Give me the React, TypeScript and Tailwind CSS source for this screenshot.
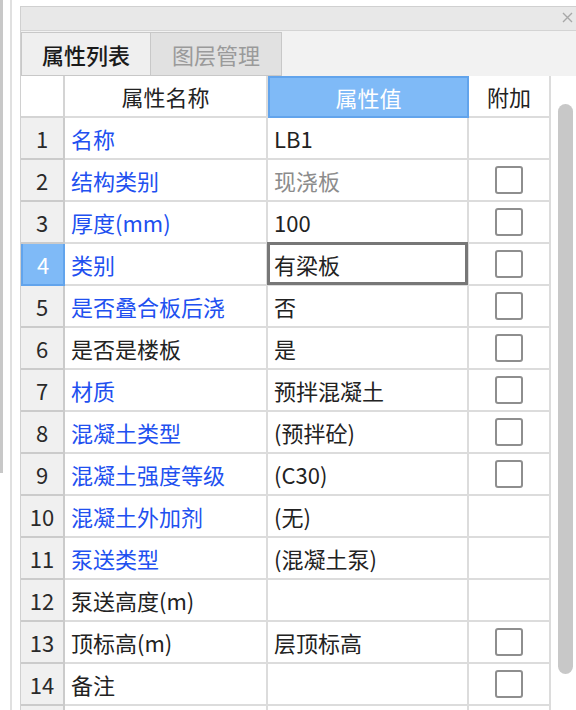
import React from 'react';

type Row = {
  no: number;
  name: string;
  value: string;
  blue: boolean;
  check: boolean;
  muted?: boolean;
};

const rows: Row[] = [
  { no: 1, name: '名称', value: 'LB1', blue: true, check: false },
  { no: 2, name: '结构类别', value: '现浇板', blue: true, check: true, muted: true },
  { no: 3, name: '厚度(mm)', value: '100', blue: true, check: true },
  { no: 4, name: '类别', value: '有梁板', blue: true, check: true },
  { no: 5, name: '是否叠合板后浇', value: '否', blue: true, check: true },
  { no: 6, name: '是否是楼板', value: '是', blue: false, check: true },
  { no: 7, name: '材质', value: '预拌混凝土', blue: true, check: true },
  { no: 8, name: '混凝土类型', value: '(预拌砼)', blue: true, check: true },
  { no: 9, name: '混凝土强度等级', value: '(C30)', blue: true, check: true },
  { no: 10, name: '混凝土外加剂', value: '(无)', blue: true, check: false },
  { no: 11, name: '泵送类型', value: '(混凝土泵)', blue: true, check: false },
  { no: 12, name: '泵送高度(m)', value: '', blue: false, check: false },
  { no: 13, name: '顶标高(m)', value: '层顶标高', blue: false, check: true },
  { no: 14, name: '备注', value: '', blue: false, check: true },
];

const SELECTED = 4;

const font = { fontFamily: '"Noto Sans CJK SC", "Noto Sans", sans-serif' };

const Checkbox = () => (
  <div className="w-[28px] h-[28px] border-2 border-[#8e8e8e] rounded-[3px] bg-white" />
);

export default function App() {
  return (
    <div className="w-[576px] h-[710px] overflow-hidden bg-white flex" style={font}>
      {/* left edge of neighbouring pane */}
      <div className="w-[20px] h-full flex shrink-0">
        <div className="w-[3px] h-[473px] bg-[#c8c8c8]" />
        <div className="w-[7px]" />
        <div className="w-[2px] h-full bg-[#e0e0e0]" />
      </div>

      <div className="flex-1 mt-[6px] border-l border-t border-[#d0d0d0] flex flex-col min-w-0">
        {/* title bar */}
        <div className="h-[24px] bg-[#e8e8e8] border-b border-[#d4d4d4] flex items-center justify-end pr-[3px] shrink-0">
          <svg width="11" height="11" viewBox="0 0 11 11" className="mb-[2px]">
            <path d="M1 1 L10 10 M10 1 L1 10" stroke="#a8a8a8" strokeWidth="1.4" />
          </svg>
        </div>

        {/* tabs */}
        <div className="h-[45px] bg-[#f2f2f2] flex shrink-0 pt-[1px]">
          <div className="w-[130px] bg-[#efefef] border border-[#c8c8c8] flex items-center justify-center text-[22px] text-[#1a1a1a] font-medium">
            属性列表
          </div>
          <div className="w-[131px] bg-[#e1e1e1] border border-l-0 border-[#c8c8c8] flex items-center justify-center text-[22px] text-[#9a9a9a]">
            图层管理
          </div>
        </div>

        {/* table + scrollbar */}
        <div className="flex flex-1 min-h-0">
          <div className="w-[528px] shrink-0 grid grid-cols-[44px_203px_201px_80px] auto-rows-[42px] text-[22px]">
            {/* header */}
            <div className="bg-white border-r-2 border-b-2 border-[#d4d4d4]" />
            <div className="bg-white border-r-2 border-b-2 border-[#dcdcdc] flex items-center justify-center text-[#222]">
              属性名称
            </div>
            <div className="bg-[#7fbaf7] border-2 border-[#62a4ec] flex items-center justify-center text-white">
              属性值
            </div>
            <div className="bg-white border-b-2 border-[#dcdcdc] flex items-center justify-center text-[#222]">
              附加
            </div>

            {rows.map((r) => {
              const sel = r.no === SELECTED;
              return (
                <React.Fragment key={r.no}>
                  <div
                    className={
                      sel
                        ? 'bg-[#7fbaf7] border-2 border-t-0 border-[#62a4ec] flex items-center justify-center text-white'
                        : 'bg-[#f0f0f0] border-r-2 border-b-2 border-[#cbcbcb] flex items-center justify-center text-[#2a2a2a]'
                    }
                  >
                    {r.no}
                  </div>
                  <div
                    className={
                      'border-r-2 border-b-2 border-[#dcdcdc] flex items-center pl-[6px] whitespace-nowrap ' +
                      (r.blue ? 'text-[#2150f0]' : 'text-[#222]')
                    }
                  >
                    {r.name}
                  </div>
                  <div className="relative border-r-2 border-b-2 border-[#dcdcdc] flex items-center pl-[6px] whitespace-nowrap">
                    <span className={r.muted ? 'text-[#8c8c8c]' : 'text-[#222]'}>{r.value}</span>
                    {sel && (
                      <div className="absolute -left-[1px] -top-[2px] -right-[1px] -bottom-[1px] border-[3px] border-[#777777]" />
                    )}
                  </div>
                  <div className="border-b-2 border-[#dcdcdc] flex items-center justify-center">
                    {r.check && <Checkbox />}
                  </div>
                </React.Fragment>
              );
            })}

            {/* next row, cut off */}
            <div className="bg-[#f0f0f0] border-r-2 border-[#cbcbcb]" />
            <div className="border-r-2 border-[#dcdcdc]" />
            <div className="border-r-2 border-[#dcdcdc]" />
            <div />
          </div>

          {/* scrollbar */}
          <div className="flex-1 border-l-2 border-[#dcdcdc] pl-[7px] pt-[28px]">
            <div className="w-[15px] h-[570px] rounded-full bg-[#c8c8c8]" />
          </div>
        </div>
      </div>
    </div>
  );
}
